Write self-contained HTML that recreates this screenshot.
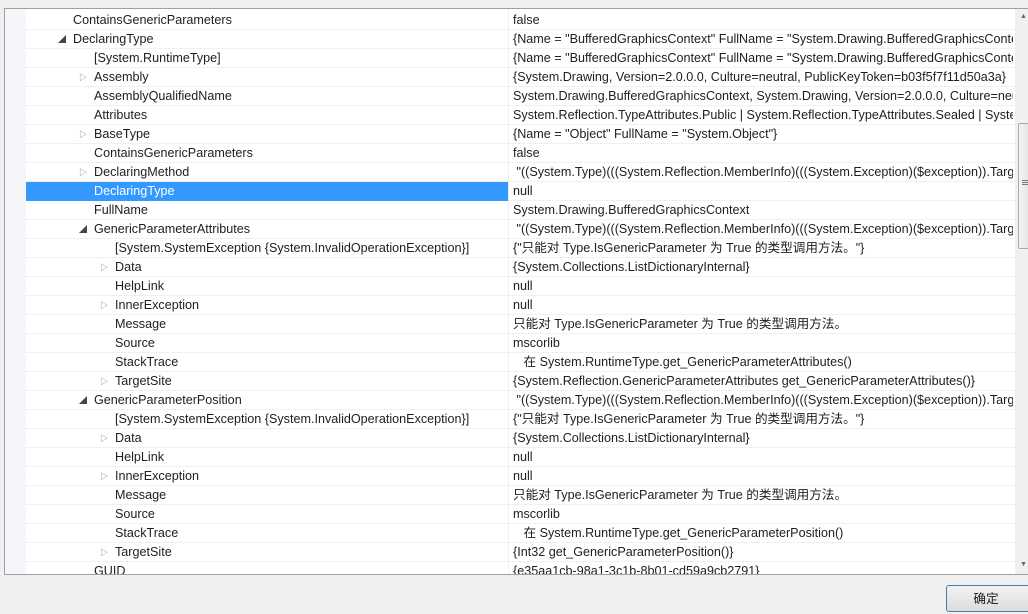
<!DOCTYPE html>
<html><head><meta charset="utf-8"><style>
body{margin:0;width:1028px;height:614px;background:#f0f0f0;position:relative;overflow:hidden;font-family:"Liberation Sans","Noto Sans CJK SC",sans-serif;font-size:12.6px;color:#1e1e1e}
#box{position:absolute;left:4px;top:8px;width:1030px;height:565px;background:#fff;border:1px solid #a0a0a0;overflow:hidden}
#gut{position:absolute;left:0;top:0;width:21px;height:100%;background:#f4f6f9}
.r{position:absolute;left:21px;width:990px;height:19px;border-bottom:1px solid #f0f0f0;box-sizing:border-box;line-height:19px;white-space:nowrap}
.n{position:absolute;top:0}
.v{position:absolute;left:487px;top:0;width:500px;overflow:hidden}
.sep{position:absolute;left:503px;top:0;width:1px;height:100%;background:#f0f0f0}
.a{position:absolute;top:0;font-size:8px;color:#777}
.sel{background:#3399ff;width:482px}
#sb{position:absolute;left:1010px;top:0;width:18px;height:566px;background:#f0f0f0}
#th{position:absolute;left:1013px;top:114px;width:14px;height:124px;background:linear-gradient(90deg,#f4f4f4,#ddd);border:1px solid #aaa;border-radius:2px}
#btn{position:absolute;left:946px;top:585px;width:90px;height:27px;border:1px solid #3c7fb1;border-radius:3px;background:linear-gradient(#f2f2f2,#dcdcdc);text-align:center;line-height:27px;box-sizing:border-box;padding-right:10px}
</style></head><body>
<div id="box"><div id="gut"></div><div class="sep"></div>
<div id="rows"></div>
<div id="sb"><div style="position:absolute;left:5px;top:4px;font-size:7px;color:#666">▲</div><div style="position:absolute;left:5px;top:552px;font-size:7px;color:#666">▼</div></div><div id="th"><div style="position:absolute;left:3px;top:56px;width:7px;height:1px;background:#777;box-shadow:0 2px #777,0 4px #777"></div></div>
</div>
<div id="btn">确定</div>
<script>
var R=[
[0,"","ContainsGenericParameters","false"],
[0,"e","DeclaringType",'{Name = "BufferedGraphicsContext" FullName = "System.Drawing.BufferedGraphicsContext"}'],
[1,"","[System.RuntimeType]",'{Name = "BufferedGraphicsContext" FullName = "System.Drawing.BufferedGraphicsContext"}'],
[1,"c","Assembly","{System.Drawing, Version=2.0.0.0, Culture=neutral, PublicKeyToken=b03f5f7f11d50a3a}"],
[1,"","AssemblyQualifiedName","System.Drawing.BufferedGraphicsContext, System.Drawing, Version=2.0.0.0, Culture=neutral"],
[1,"","Attributes","System.Reflection.TypeAttributes.Public | System.Reflection.TypeAttributes.Sealed | System"],
[1,"c","BaseType",'{Name = "Object" FullName = "System.Object"}'],
[1,"","ContainsGenericParameters","false"],
[1,"c","DeclaringMethod",'&nbsp;"((System.Type)(((System.Reflection.MemberInfo)(((System.Exception)($exception)).TargetSite'],
[1,"s","DeclaringType","null"],
[1,"","FullName","System.Drawing.BufferedGraphicsContext"],
[1,"e","GenericParameterAttributes",'&nbsp;"((System.Type)(((System.Reflection.MemberInfo)(((System.Exception)($exception)).TargetSite'],
[2,"","[System.SystemException {System.InvalidOperationException}]",'{"只能对 Type.IsGenericParameter 为 True 的类型调用方法。"}'],
[2,"c","Data","{System.Collections.ListDictionaryInternal}"],
[2,"","HelpLink","null"],
[2,"c","InnerException","null"],
[2,"","Message","只能对 Type.IsGenericParameter 为 True 的类型调用方法。"],
[2,"","Source","mscorlib"],
[2,"","StackTrace","&nbsp;&nbsp;&nbsp;在 System.RuntimeType.get_GenericParameterAttributes()"],
[2,"c","TargetSite","{System.Reflection.GenericParameterAttributes get_GenericParameterAttributes()}"],
[1,"e","GenericParameterPosition",'&nbsp;"((System.Type)(((System.Reflection.MemberInfo)(((System.Exception)($exception)).TargetSite'],
[2,"","[System.SystemException {System.InvalidOperationException}]",'{"只能对 Type.IsGenericParameter 为 True 的类型调用方法。"}'],
[2,"c","Data","{System.Collections.ListDictionaryInternal}"],
[2,"","HelpLink","null"],
[2,"c","InnerException","null"],
[2,"","Message","只能对 Type.IsGenericParameter 为 True 的类型调用方法。"],
[2,"","Source","mscorlib"],
[2,"","StackTrace","&nbsp;&nbsp;&nbsp;在 System.RuntimeType.get_GenericParameterPosition()"],
[2,"c","TargetSite","{Int32 get_GenericParameterPosition()}"],
[1,"","GUID","{e35aa1cb-98a1-3c1b-8b01-cd59a9cb2791}"]];
var h="";
R.forEach(function(r,i){var x=47+21*r[0];var ar="";
if(r[1]=="e")ar='<span class="a" style="left:'+(x-15)+'px;color:#444">◢</span>';
if(r[1]=="c")ar='<span class="a" style="left:'+(x-15)+'px">▷</span>';
h+='<div class="r" style="top:'+(2+19*i)+'px">'+(r[1]=="s"?'<div class="sel" style="position:absolute;left:0;top:0;height:19px"></div>':'')+ar+'<span class="n" style="left:'+x+'px;'+(r[1]=="s"?'color:#fff':'')+'">'+r[2]+'</span><span class="v">'+r[3]+'</span></div>';});
document.getElementById("rows").innerHTML=h;
</script>
</body></html>
